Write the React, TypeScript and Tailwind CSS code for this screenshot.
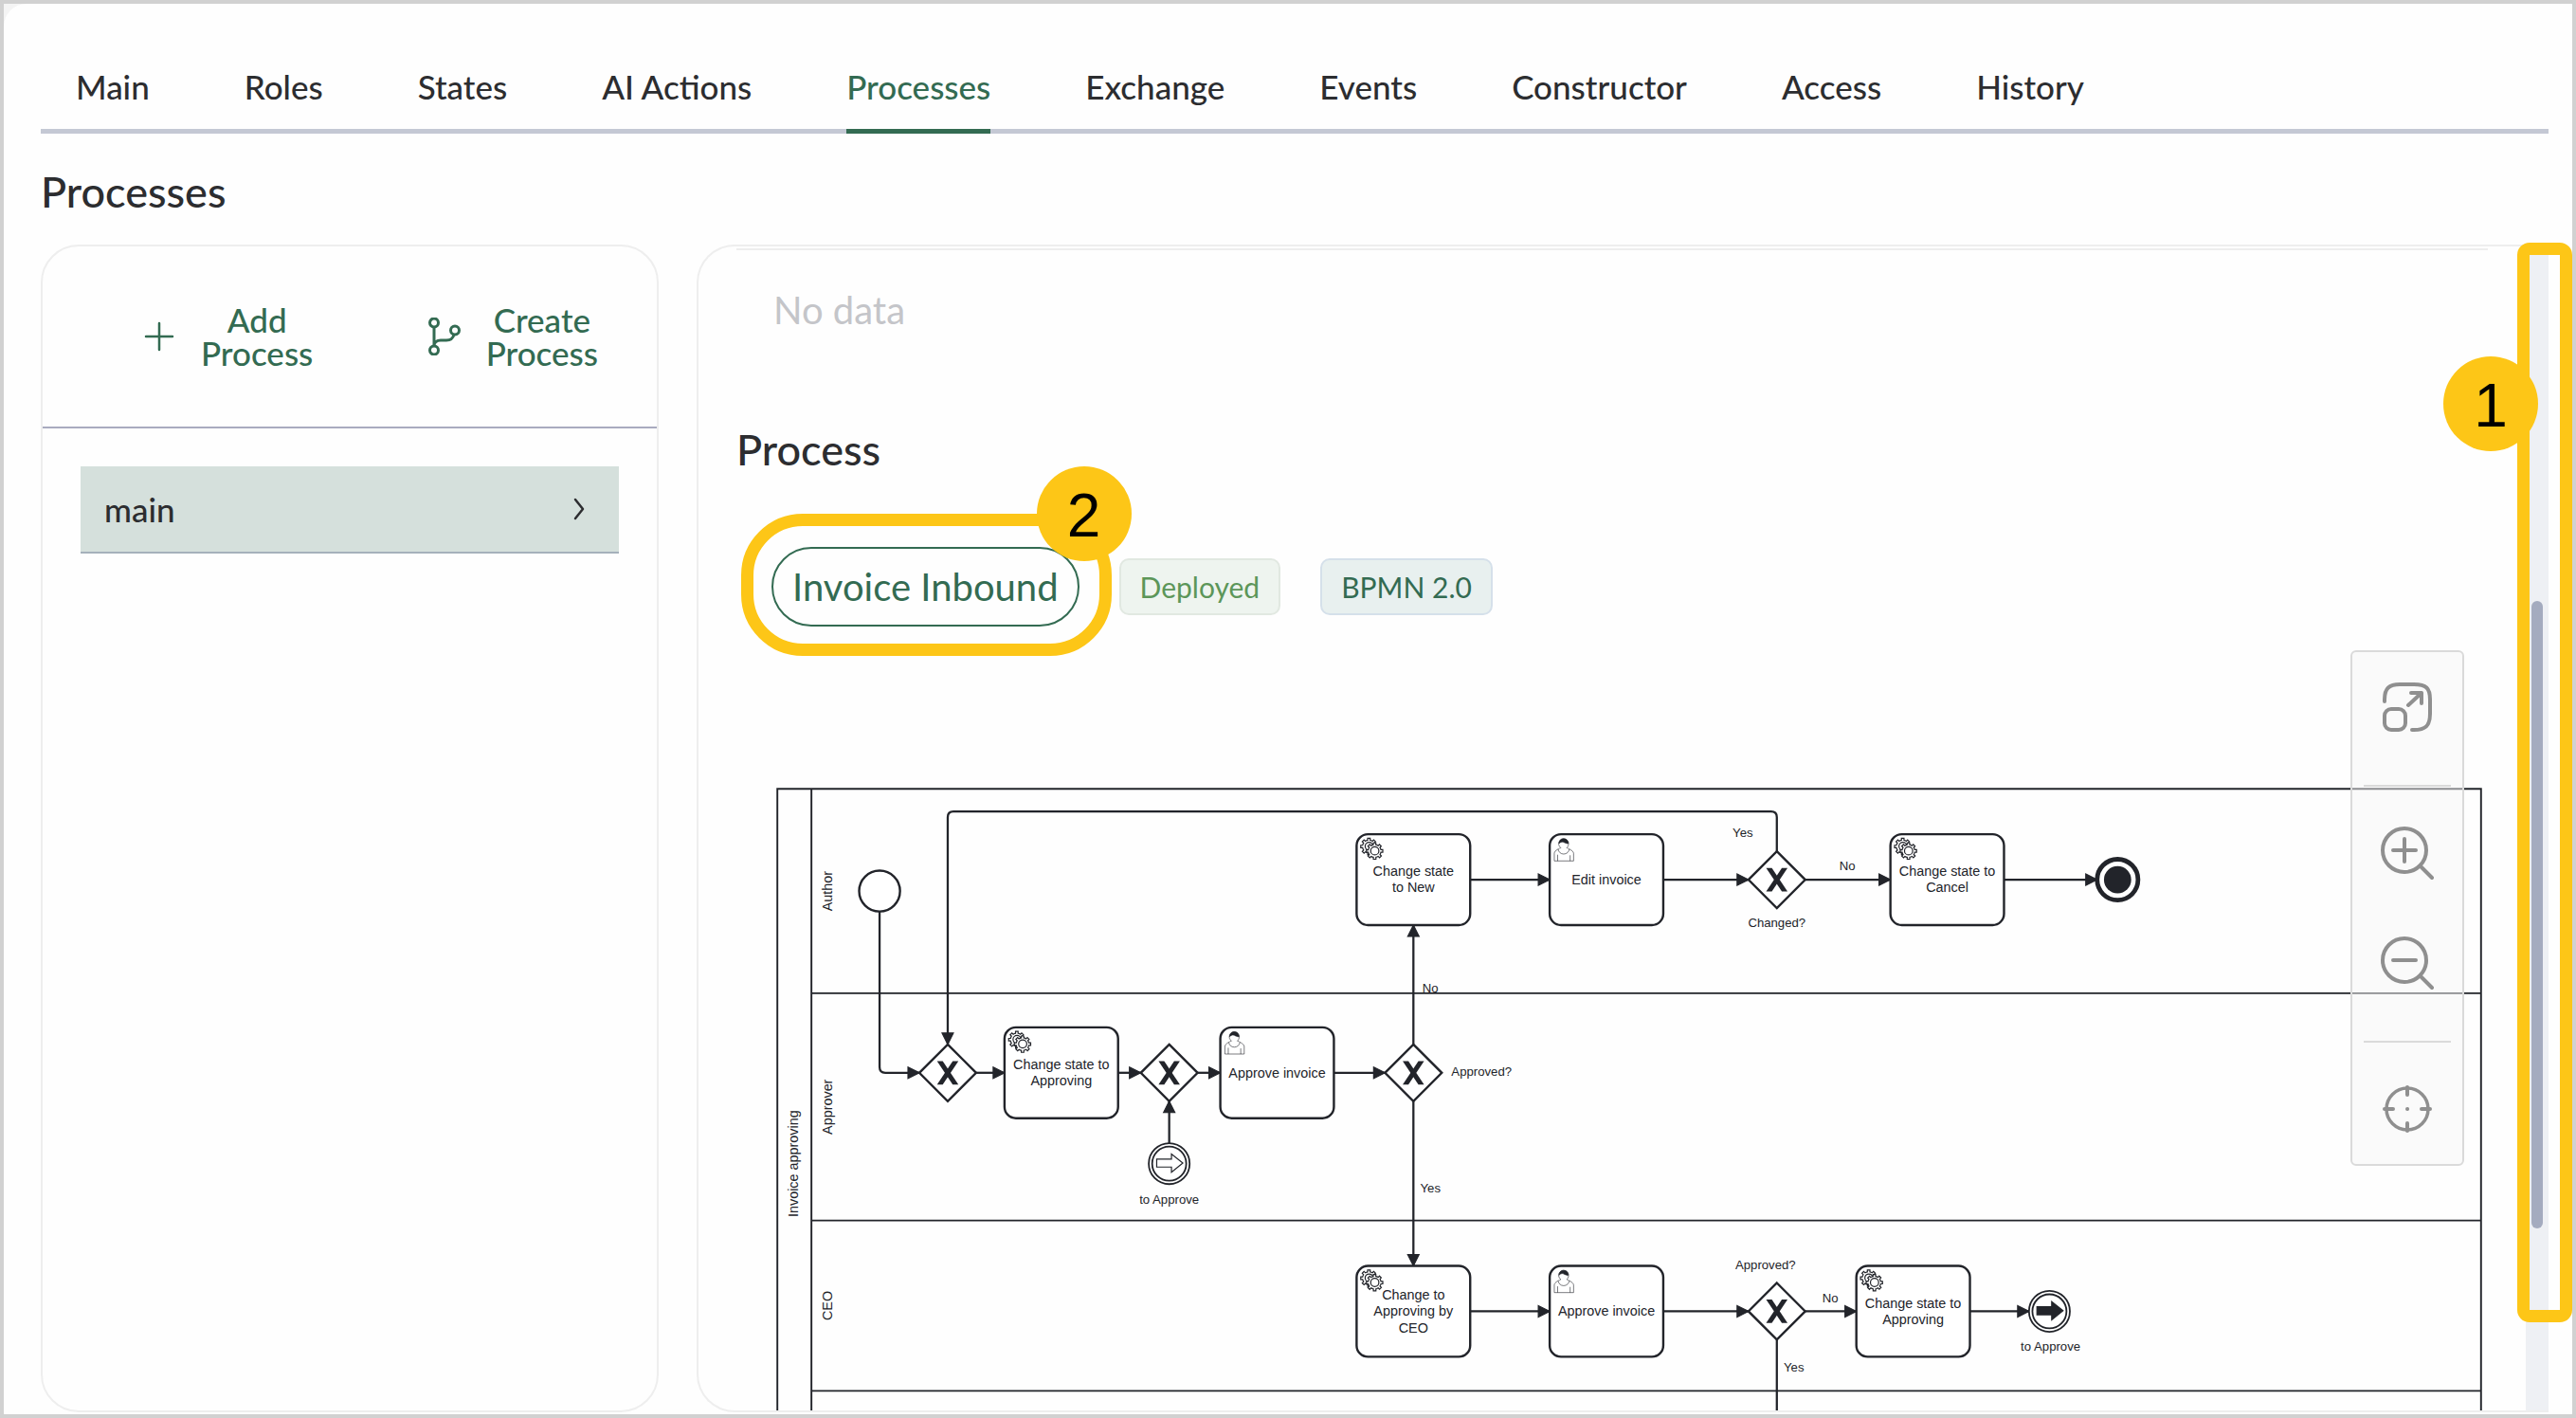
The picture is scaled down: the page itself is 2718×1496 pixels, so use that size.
import React, { useState } from 'react';

interface Box {
  x: number;
  y: number;
}

interface Task extends Box {
  kind: 'service' | 'user';
  lines: string[];
}

interface Label extends Box {
  text: string;
}

const TABS = [
  'Main',
  'Roles',
  'States',
  'AI Actions',
  'Processes',
  'Exchange',
  'Events',
  'Constructor',
  'Access',
  'History',
];

const TASKS: Task[] = [
  { x: 510, y: 40, kind: 'service', lines: ['Change state', 'to New'] },
  { x: 680, y: 40, kind: 'user', lines: ['Edit invoice'] },
  { x: 980, y: 40, kind: 'service', lines: ['Change state to', 'Cancel'] },
  { x: 200, y: 210, kind: 'service', lines: ['Change state to', 'Approving'] },
  { x: 390, y: 210, kind: 'user', lines: ['Approve invoice'] },
  { x: 510, y: 420, kind: 'service', lines: ['Change to', 'Approving by', 'CEO'] },
  { x: 680, y: 420, kind: 'user', lines: ['Approve invoice'] },
  { x: 950, y: 420, kind: 'service', lines: ['Change state to', 'Approving'] },
];

const GATEWAYS: Box[] = [
  { x: 880, y: 80 },
  { x: 150, y: 250 },
  { x: 345, y: 250 },
  { x: 560, y: 250 },
  { x: 880, y: 460 },
];

const FLOWS = [
  'M90 108V245Q90 250 95 250H125',
  'M880 55V25Q880 20 875 20H155Q150 20 150 25V225',
  'M175 250H200',
  'M300 250H320',
  'M345 312V275',
  'M370 250H390',
  'M490 250H535',
  'M560 225V120',
  'M560 275V420',
  'M610 80H680',
  'M780 80H855',
  'M905 80H980',
  'M1080 80H1162',
  'M610 460H680',
  'M780 460H855',
  'M905 460H950',
  'M1050 460H1102',
  'M880 485V640',
];

const LABELS: Label[] = [
  { x: 850, y: 42, text: 'Yes' },
  { x: 880, y: 122, text: 'Changed?' },
  { x: 942, y: 72, text: 'No' },
  { x: 575, y: 179, text: 'No' },
  { x: 620, y: 253, text: 'Approved?' },
  { x: 575, y: 355, text: 'Yes' },
  { x: 345, y: 365, text: 'to Approve' },
  { x: 870, y: 423, text: 'Approved?' },
  { x: 927, y: 452, text: 'No' },
  { x: 895, y: 513, text: 'Yes' },
  { x: 1121, y: 495, text: 'to Approve' },
];

const LANES: Label[] = [
  { x: 18, y: 330, text: 'Invoice approving' },
  { x: 48, y: 90, text: 'Author' },
  { x: 48, y: 280, text: 'Approver' },
  { x: 48, y: 455, text: 'CEO' },
];

const GEAR =
  'v-1.713c.352-.07.704-.178 1.048-.321.344-.145.666-.321.966-.521l1.194 1.18 1.568-1.577-1.195-1.18c.403-.614.683-1.299.825-2.018l1.622-.01v-2.22l-1.636.01c-.074-.352-.179-.7-.324-1.044-.145-.344-.321-.664-.523-.962l1.131-1.136-1.583-1.563-1.13 1.136c-.614-.401-1.303-.681-2.022-.823l.009-1.618h-2.241l.004 1.631c-.354.074-.705.18-1.05.324-.344.144-.665.321-.963.52l-1.17-1.158-1.567 1.579 1.168 1.157c-.402.613-.683 1.298-.824 2.017l-1.659.003v2.222l1.672-.006c.074.35.18.702.325 1.044.145.345.321.665.522.961l-1.199 1.197 1.584 1.56 1.197-1.193c.614.403 1.303.682 2.023.823l.001 1.699h2.227z';

const ServiceMark: React.FC = () => (
  <g fill="#fff" stroke="#22242a" strokeWidth="1">
    <path d={`M12 18${GEAR}`} />
    <circle cx="11" cy="10.6" r="3.5" />
    <path d={`M17 22${GEAR}`} />
    <circle cx="16" cy="14.6" r="3.6" />
  </g>
);

const UserMark: React.FC = () => (
  <g fill="#fff" stroke="#22242a" strokeWidth="0.5">
    <path d="M15 12c.909-.845 1.594-2.049 1.594-3.385 0-2.554-1.805-4.622-4.357-4.622s-4.288 2.068-4.288 4.622c0 1.348.974 2.562 1.896 3.405-.529.187-5.669 2.097-5.794 4.756v6.718h17v-6.718c0-2.298-5.528-4.595-6.051-4.776zm-8 6v5.5m11 0v-5" />
    <path d="M17.162 13.009c0 2.447-2.158 4.431-4.821 4.431-2.665 0-4.822-1.981-4.822-4.431" />
    <path
      d="M8.1 8.2s2.251-2.358 4.274-1.177c2.024 1.181 4.221 1.537 4.124.965-.098-.57-.117-3.791-4.191-4.136-3.575.001-4.208 3.367-4.207 4.348z"
      fill="#22242a"
    />
  </g>
);

const Diagram: React.FC = () => (
  <svg
    viewBox="-1 -1 1507 640"
    className="block w-full"
    fontFamily="'Liberation Sans', Arial, sans-serif"
    role="img"
    aria-label="Invoice approving"
  >
    <defs>
      <marker id="flow-end" viewBox="0 0 12 12" refX="11" refY="6" markerWidth="12" markerHeight="12" markerUnits="userSpaceOnUse" orient="auto">
        <path d="M1 1L11 6L1 11Z" fill="#22242a" stroke="#22242a" strokeWidth="1" />
      </marker>
    </defs>

    <g fill="none" stroke="#22242a" strokeWidth="1.6">
      <path d="M0 700V0H1500V700M30 0V700M30 180H1500M30 380H1500M30 530H1500" />
    </g>

    {LANES.map((lane) => (
      <text key={lane.text} transform={`translate(${lane.x} ${lane.y}) rotate(-90)`} textAnchor="middle" fontSize="12" fill="#22242a">
        {lane.text}
      </text>
    ))}

    <g fill="none" stroke="#22242a" strokeWidth="1.9">
      {FLOWS.map((d) => (
        <path key={d} d={d} markerEnd="url(#flow-end)" />
      ))}
    </g>

    {TASKS.map((task) => (
      <g key={`${task.x}-${task.y}`} transform={`translate(${task.x} ${task.y})`}>
        <rect width="100" height="80" rx="10" fill="#fff" stroke="#22242a" strokeWidth="2" />
        {task.kind === 'service' ? <ServiceMark /> : <UserMark />}
        {task.lines.map((line, i) => (
          <text key={line} x="50" y={44 + i * 14.4 - (task.lines.length - 1) * 7.2} textAnchor="middle" fontSize="12" fill="#22242a">
            {line}
          </text>
        ))}
      </g>
    ))}

    {GATEWAYS.map((gateway) => (
      <g key={`${gateway.x}-${gateway.y}`} transform={`translate(${gateway.x} ${gateway.y})`}>
        <path d="M0-25L25 0L0 25L-25 0Z" fill="#fff" stroke="#22242a" strokeWidth="2" />
        <path d="M-9.4-10.3h5L9.4 10.3h-5Z" fill="#22242a" />
        <path d="M9.4-10.3h-5L-9.4 10.3h5Z" fill="#22242a" />
      </g>
    ))}

    {/* start and end events */}
    <circle cx="90" cy="90" r="18" fill="#fff" stroke="#22242a" strokeWidth="2" />
    <circle cx="1180" cy="80" r="18" fill="#fff" stroke="#22242a" strokeWidth="4" />
    <circle cx="1180" cy="80" r="12" fill="#22242a" />

    {/* link events */}
    <g fill="#fff" stroke="#22242a" strokeWidth="1.5">
      <circle cx="345" cy="330" r="18" />
      <circle cx="345" cy="330" r="15" />
      <path d="M334 326H347V321.500L357 329.500L347 337.500V333H334Z" strokeWidth="1" />
      <circle cx="1120" cy="460" r="18" />
      <circle cx="1120" cy="460" r="15" />
      <path d="M1109 456H1122V451.500L1132 459.500L1122 467.500V463H1109Z" strokeWidth="1" fill="#22242a" />
    </g>

    {LABELS.map((label) => (
      <text key={`${label.x}-${label.y}`} x={label.x} y={label.y} textAnchor="middle" fontSize="11" fill="#22242a">
        {label.text}
      </text>
    ))}
  </svg>
);

const Badge: React.FC<{ className: string; children: React.ReactNode }> = ({ className, children }) => (
  <span
    className={`absolute flex size-[100px] items-center justify-center rounded-full bg-[#fdc617] pt-1 font-['Liberation_Sans',Arial,sans-serif] text-[64px] leading-none text-black ${className}`}
  >
    {children}
  </span>
);

const ToolButton: React.FC<{ label: string; children: React.ReactNode }> = ({ label, children }) => (
  <button type="button" aria-label={label} className="flex h-[116px] items-center justify-center">
    <svg viewBox="0 0 60 60" className="size-[60px]" fill="none" stroke="#8f8f8f" strokeWidth="4" strokeLinecap="round" strokeLinejoin="round">
      {children}
    </svg>
  </button>
);

const Toolbar: React.FC = () => (
  <div className="absolute top-0 right-[25px] flex w-[120px] flex-col rounded-md border-2 border-[#dadada] bg-[#f5f5f5]/50">
    <ToolButton label="Fit to screen">
      <path d="M6 24V22C6 10 11 6 22 6H37C50 6 54 10 54 22V37C54 50 49 54 37 54H35" />
      <rect x="6" y="32" width="22" height="22" rx="7" />
      <path d="M31 28L45 15M34 15H45V26" />
    </ToolButton>
    <div className="mx-3 mt-6 mb-3 h-0.5 bg-[#dadada]" />
    <ToolButton label="Zoom in">
      <circle cx="27" cy="27" r="23" />
      <path d="M44 44L56 56M15 27H39M27 15V39" />
    </ToolButton>
    <ToolButton label="Zoom out">
      <circle cx="27" cy="27" r="23" />
      <path d="M44 44L56 56M15 27H39" />
    </ToolButton>
    <div className="mx-3 mt-6 mb-3 h-0.5 bg-[#dadada]" />
    <ToolButton label="Center diagram">
      <circle cx="30" cy="30" r="22" strokeWidth="3.500" />
      <path d="M30 7V15M30 45V53M6 30H15M45 30H54M30 30h.1" />
    </ToolButton>
  </div>
);

const App: React.FC = () => {
  const [activeTab, setActiveTab] = useState<string>('Processes');

  return (
    <div className="h-screen border-4 border-[#d1d1d1] bg-[#f4f4f4] font-[Lato,sans-serif] text-[#2c2d30]">
      <div className="flex h-full flex-col rounded-tl-3xl bg-[#fefefe] pt-[65px] pr-[25px] pl-[39px]">
        <nav className="flex gap-[100px] border-b-[5px] border-[#c4c8d4] pl-[37px]">
          {TABS.map((tab) => (
            <button
              key={tab}
              type="button"
              onClick={() => setActiveTab(tab)}
              className={`-mb-[5px] border-b-[5px] pb-[23px] text-[35px] leading-[44px] font-medium whitespace-nowrap ${
                tab === activeTab ? 'border-[#336b52] text-[#336b52]' : 'border-transparent'
              }`}
            >
              {tab}
            </button>
          ))}
        </nav>

        <h1 className="mt-[34px] text-[45px] leading-[54px] font-medium">Processes</h1>

        <div className="mt-[29px] mb-0.5 flex min-h-0 flex-1 gap-10">
          <aside className="w-[652px] shrink-0 rounded-[40px] border-2 border-[#eeeeee]">
            <div className="flex h-[192px] items-center justify-between border-b-2 border-[#a9abbf] pr-[62px] pl-[103px] text-[35px] leading-[35px] font-medium text-[#336b52]">
              <button type="button" className="flex items-center gap-6">
                <svg viewBox="0 0 40 40" className="size-10" fill="none" stroke="currentColor" strokeWidth="3" strokeLinecap="round">
                  <path d="M20 6V34M6 20H34" strokeWidth="2.500" />
                </svg>
                <span>
                  <span className="block">Add</span>
                  <span className="block">Process</span>
                </span>
              </button>
              <button type="button" className="flex items-center gap-6">
                <svg viewBox="0 0 40 40" className="size-10" fill="none" stroke="currentColor" strokeWidth="3">
                  <circle cx="9" cy="5.500" r="4.500" />
                  <circle cx="31" cy="13.500" r="4.500" />
                  <circle cx="9" cy="34.500" r="4.500" />
                  <path d="M9 10V30C9 26 12 24 16 24H22C27 24 29 22 30 18" />
                </svg>
                <span>
                  <span className="block">Create</span>
                  <span className="block">Process</span>
                </span>
              </button>
            </div>
            <button
              type="button"
              className="mx-10 mt-10 flex h-[92px] w-[568px] items-center justify-between border-b-2 border-[#a5b1bb] bg-[#d5e0dc] pr-[36px] pl-[25px] text-[35px] leading-[44px] font-medium"
            >
              main
              <svg viewBox="0 0 12 24" className="h-6 w-3" fill="none" stroke="currentColor" strokeWidth="2.500" strokeLinecap="round" strokeLinejoin="round">
                <path d="M2 2L10 12L2 22" />
              </svg>
            </button>
          </aside>

          <main className="relative min-w-0 flex-1">
            <div className="flex h-full overflow-hidden rounded-l-[40px] border-2 border-r-0 border-[#eeeeee]">
              <div className="min-w-0 flex-1 overflow-hidden pt-0.5 pr-10 pl-10">
                <p className="border-t-2 border-[#eeeeee] pt-[39px] pl-[39px] text-[40px] leading-[48px] text-[#c4c5c9]">No data</p>
                <h2 className="mt-24 text-[45px] leading-[54px] font-medium">Process</h2>

                <div className="mt-[76px] flex items-center gap-[42px] pl-[37px]">
                  <div className="relative">
                    <a
                      href="#invoice-inbound"
                      className="flex h-[84px] items-center rounded-full border-2 border-[#336b52] px-5 text-[40px] leading-[48px] whitespace-nowrap text-[#336b52]"
                    >
                      Invoice Inbound
                    </a>
                    <span className="absolute -top-[35px] -right-[34px] -bottom-[31px] -left-8 rounded-[65px] border-[13px] border-[#fdc617]" />
                    <Badge className="-top-[85px] -right-[55px]">2</Badge>
                  </div>
                  <span className="rounded-[10px] border-2 border-[#e1e8e1] bg-[#eef4ef] px-5 py-2 text-[30px] leading-10 text-[#5c9659]">Deployed</span>
                  <span className="rounded-[10px] border-2 border-[#d5e0ea] bg-[#e8f0ef] px-5 py-2 text-[30px] leading-10 text-[#336b52]">BPMN 2.0</span>
                </div>

                <div className="relative mt-[25px] pt-[145px] pl-[42px]">
                  <Diagram />
                  <Toolbar />
                </div>
              </div>

              {/* scroll track */}
              <div className="flex w-6 flex-col bg-[#eef0f4] pl-1.5">
                <div className="grow-[374]" />
                <div className="w-3 grow-[662] rounded-full bg-[#a4abbf]" />
                <div className="grow-[192]" />
              </div>
            </div>
            <span className="absolute -top-0.5 -right-[25px] bottom-[95px] w-[58px] rounded-[13px] border-[13px] border-[#fdc617]" />
            <Badge className="top-[118px] right-[11px]">1</Badge>
          </main>
        </div>
      </div>
    </div>
  );
};

export default App;
